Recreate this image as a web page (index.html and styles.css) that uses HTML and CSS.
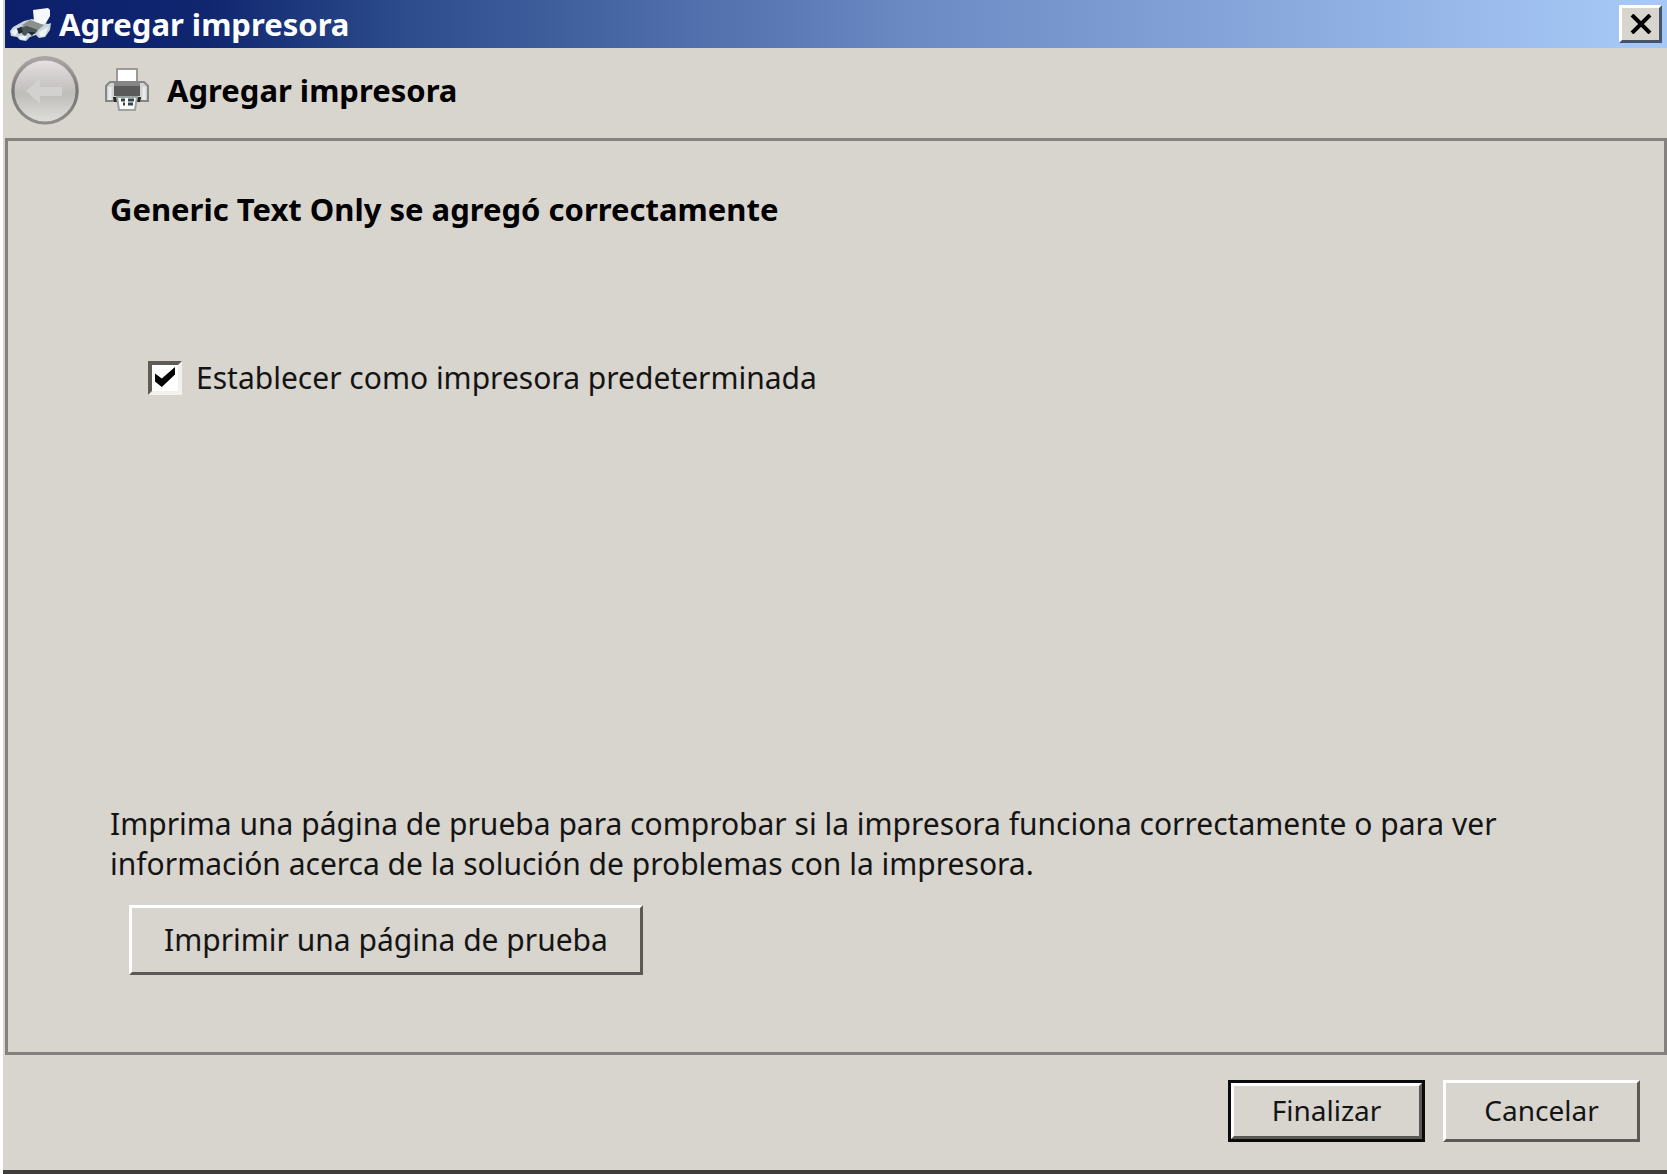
FILE: index.html
```html
<!DOCTYPE html>
<html lang="es">
<head>
  <meta charset="UTF-8">
  <meta name="viewport" content="width=device-width, initial-scale=1.0">
  <title>Agregar impresora</title>
  <link rel="stylesheet" href="styles.css">
</head>
<body>
  <div class="window">
    <div class="titlebar">
      <svg class="title-icon" viewBox="0 0 42 34">
        <path d="M3 20 L14 14 L22 12 L38 17 L41 16 L40 23 L35 30 L29 31 L26 28 L20 30 L16 34 L10 33 L7 30 L1 29 L0 24 Z" fill="#c9d5dd"/>
        <path d="M23 3 L38 1 L40 3 L40 9 L36 16 L31 18 L24 14 Z" fill="#f6f8fc"/>
        <path d="M12 18 L20 13 L34 18 L28 23 L18 21 Z" fill="#8b918b"/>
        <path d="M10 20 L17 19 L28 23 L25 27 L18 26 L15 29 L12 27 Z" fill="#4c5557"/>
        <path d="M6 22 L11 20 L13 25 L9 27 Z M18 25 L25 25 L22 29 Z" fill="#1f2a36"/>
        <path d="M1 25 L6 21 L8 24 L5 29 Z M9 29 L17 29 L15 33 L10 32 Z M29 25 L38 20 L35 29 L30 30 Z" fill="#eef3f6"/>
      </svg>
      <span class="title">Agregar impresora</span>
      <button class="close" aria-label="Cerrar">
        <svg viewBox="0 0 22 20"><path d="M2 1 L20 19 M20 1 L2 19" stroke="#000" stroke-width="4"/></svg>
      </button>
    </div>

    <div class="header">
      <button class="back" aria-label="Atrás" disabled>
        <svg viewBox="0 0 70 70">
          <defs>
            <linearGradient id="ball" x1="0" y1="0" x2="0" y2="1">
              <stop offset="0" stop-color="#e9e1e3"/>
              <stop offset="0.3" stop-color="#d0cdcc"/>
              <stop offset="0.55" stop-color="#bfbdba"/>
              <stop offset="1" stop-color="#e0e0db"/>
            </linearGradient>
            <linearGradient id="ring" x1="0" y1="0" x2="0" y2="1">
              <stop offset="0" stop-color="#aaa5a4"/>
              <stop offset="0.5" stop-color="#777572"/>
              <stop offset="1" stop-color="#8e8d89"/>
            </linearGradient>
          </defs>
          <circle cx="35" cy="35" r="34" fill="#a9a4a3"/>
          <circle cx="35" cy="36" r="32" fill="url(#ball)" stroke="url(#ring)" stroke-width="3"/>
          <path d="M16 36 L30 23 V32 H52 V41 H30 V49 Z" fill="#d3d1cf"/>
        </svg>
      </button>
      <svg class="printer" viewBox="0 0 44 44">
        <path d="M12 15 V1 H32 V15" fill="#fff" stroke="#9a9a98" stroke-width="2"/>
        <path d="M1 33 V18 L5 14 H39 L43 18 V33 H35 V30 H9 V33 Z" fill="#d2d3d2" stroke="#858585" stroke-width="2"/>
        <path d="M9 14 H35 V21 H9 Z" fill="#858585"/>
        <path d="M9 18 H35 V28 H9 Z" fill="#5a5a5a"/>
        <path d="M5 19 V32 M39 19 V32" stroke="#ececec" stroke-width="3"/>
        <path d="M8 29 H13 V34 H9 Z M31 29 H36 L35 34 H31 Z" fill="#262626"/>
        <path d="M12 29 H32 L30 42 H14 Z" fill="#fafafa" stroke="#9aa3a1" stroke-width="2"/>
        <path d="M16 32 H20 M23 32 H29 M18 36 H20 M23 36 H28" stroke="#32464a" stroke-width="3"/>
      </svg>
      <h1>Agregar impresora</h1>
    </div>

    <form class="panel">
      <h2>Generic Text Only se agregó correctamente</h2>
      <label class="default">
        <input type="checkbox" checked>
        <span>Establecer como impresora predeterminada</span>
      </label>
      <div class="test">
        <p>Imprima una página de prueba para comprobar si la impresora funciona correctamente o para ver información acerca de la solución de problemas con la impresora.</p>
        <button type="button" class="btn btn-test">Imprimir una página de prueba</button>
      </div>
    </form>

    <div class="footer">
      <button class="btn btn-main">Finalizar</button>
      <button class="btn">Cancelar</button>
    </div>
  </div>
</body>
</html>
```
FILE: styles.css
```css
* {
  box-sizing: border-box;
}
body {
  margin: 0;
  background: #fff;
  color: #141414;
  font-family: "Noto Sans", sans-serif;
  font-size: 30px;
  line-height: 40px;
}
.window {
  display: flex;
  flex-direction: column;
  min-height: 100vh;
  margin-left: 3px;
  padding-left: 2px;
  background: #d8d4ce;
  border-bottom: 4px solid #3f3c3b;
}
.titlebar {
  display: flex;
  align-items: center;
  height: 48px;
  padding: 0 5px;
  background: linear-gradient(to right, #0c1f6c, #10266f 12%, #2c4c8c 24%, #6c8ac4 55%, #a6c8f6 98%);
  color: #fff;
}
.title-icon {
  width: 42px;
  height: 34px;
}
.title {
  flex: 1;
  margin-left: 7px;
  font-size: 31px;
  font-weight: bold;
}
.close {
  display: flex;
  align-items: center;
  justify-content: center;
  width: 43px;
  height: 38px;
  padding: 0;
  background: #d8d4ce;
  border: 3px solid;
  border-color: #fff #44546a #44546a #fff;
}
.close svg {
  width: 22px;
  height: 20px;
}
.header {
  display: flex;
  align-items: center;
  height: 90px;
  padding: 0 5px 6px;
}
.back {
  width: 70px;
  height: 70px;
  padding: 0;
  background: none;
  border: none;
}
.back svg {
  display: block;
}
.printer {
  width: 44px;
  height: 44px;
  margin: 0 18px 0 25px;
}
h1, h2 {
  margin: 0;
  color: #000;
  font-size: 31px;
  font-weight: bold;
}
.panel {
  flex: 1;
  display: flex;
  flex-direction: column;
  align-items: flex-start;
  padding: 48px 102px 77px;
  border: 3px solid #85817e;
}
.default {
  display: flex;
  align-items: center;
  margin: 129px 0 0 38px;
}
.default input {
  appearance: none;
  width: 34px;
  height: 34px;
  margin: 0 14px 0 0;
  background: #fff;
  border: 4px solid;
  border-color: #5f5c58 #f3f1ec #f3f1ec #5f5c58;
}
.default input:checked::before {
  content: "";
  display: block;
  width: 20px;
  height: 20px;
  margin: 2px 3px;
  background: #000;
  clip-path: polygon(0 32%, 34% 58%, 100% 0, 100% 38%, 34% 100%, 0 72%);
}
.test {
  margin-top: auto;
}
.test p {
  margin: 0 0 21px;
}
.btn {
  height: 62px;
  min-width: 197px;
  padding: 0 0 2px;
  background: #d8d4ce;
  color: #141414;
  font-family: inherit;
  font-size: 28px;
  border: 3px solid;
  border-color: #fff #5b5855 #5b5855 #fff;
}
.btn-test {
  height: 70px;
  margin-left: 19px;
  padding: 0 32px 2px;
  font-size: 30px;
}
.btn-main {
  outline: 3px solid #0a0a0a;
  outline-offset: -3px;
  border-width: 6px;
}
.footer {
  display: flex;
  justify-content: flex-end;
  gap: 18px;
  padding: 25px 27px 28px;
}
```
